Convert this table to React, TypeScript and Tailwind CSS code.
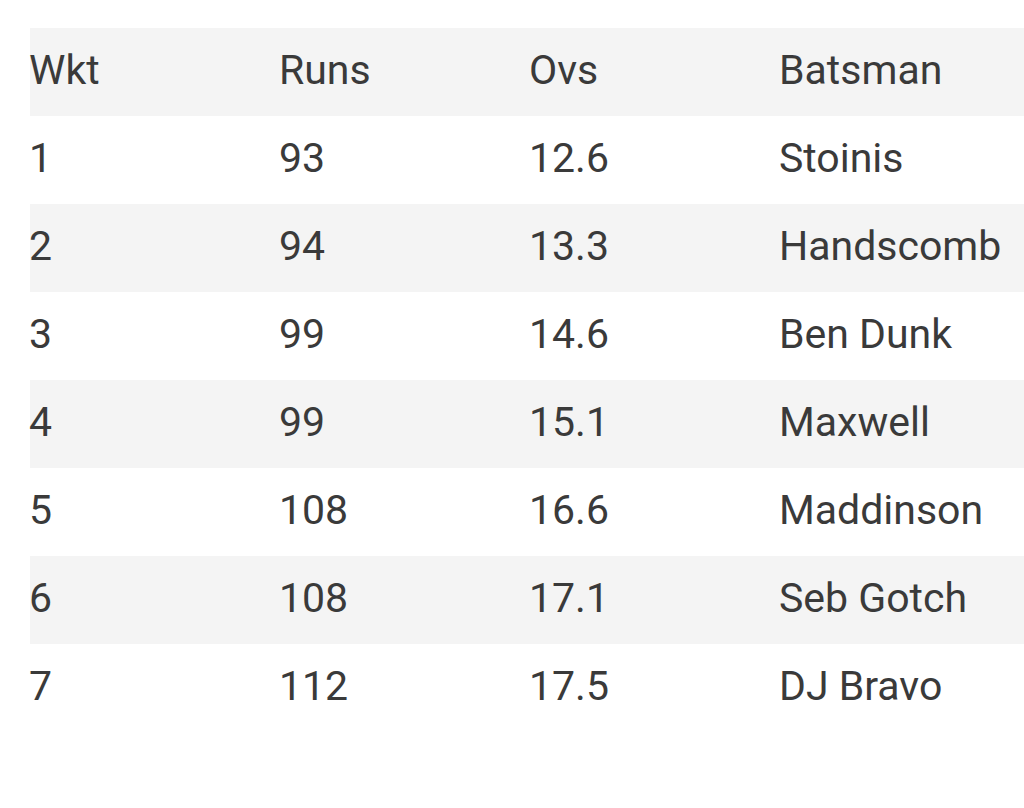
const rows = [
  ["1", "93", "12.6", "Stoinis"],
  ["2", "94", "13.3", "Handscomb"],
  ["3", "99", "14.6", "Ben Dunk"],
  ["4", "99", "15.1", "Maxwell"],
  ["5", "108", "16.6", "Maddinson"],
  ["6", "108", "17.1", "Seb Gotch"],
  ["7", "112", "17.5", "DJ Bravo"],
];

function Row({ cells, shaded }: { cells: string[]; shaded: boolean }) {
  return (
    <div
      className={`grid h-[88px] grid-cols-[250px_250px_250px_250px] items-center pb-[4px] ${
        shaded ? "bg-[#f4f4f4]" : "bg-white"
      }`}
    >
      {cells.map((c, i) => (
        <div key={i} className="-ml-[1px] whitespace-nowrap">
          {c}
        </div>
      ))}
    </div>
  );
}

export default function App() {
  return (
    <div className="h-[808px] w-[1024px] overflow-hidden bg-white pt-[28px] pl-[30px] font-['Roboto',sans-serif] text-[41px] leading-none text-[#3a3a3a]">
      <div className="w-[1000px]">
        <Row cells={["Wkt", "Runs", "Ovs", "Batsman"]} shaded />
        {rows.map((r, i) => (
          <Row key={r[0]} cells={r} shaded={i % 2 === 1} />
        ))}
      </div>
    </div>
  );
}
